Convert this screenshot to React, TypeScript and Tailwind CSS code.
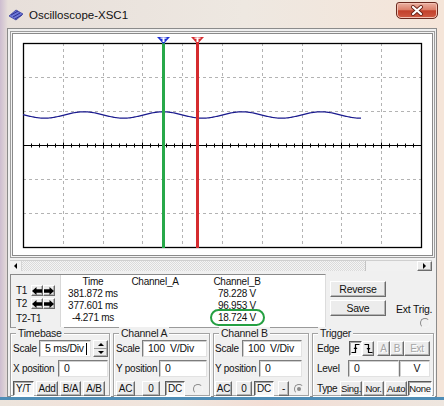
import React from 'react';
import { clsx } from 'clsx';

const raised =
  'border border-t-white border-l-white border-r-[#6c6c6c] border-b-[#6c6c6c] shadow-[inset_-1px_-1px_0_#b4b4b4] bg-[#ececec]';
const pressedCls =
  'border border-t-[#5a5a5a] border-l-[#5a5a5a] border-r-white border-b-white shadow-[inset_1px_1px_0_#a8a8a8] bg-[#f7f7f7]';

interface BtnProps {
  children?: React.ReactNode;
  pressed?: boolean;
  disabled?: boolean;
  className?: string;
}

function Btn({ children, pressed = false, disabled = false, className }: BtnProps) {
  return (
    <div
      className={clsx(
        'flex items-center justify-center shrink-0 leading-none whitespace-nowrap',
        pressed ? pressedCls : raised,
        disabled ? 'text-[#a6a6a6] [text-shadow:1px_1px_0_#fff]' : 'text-[#111]',
        className
      )}
    >
      {children}
    </div>
  );
}

function Field({ children, className }: { children?: React.ReactNode; className?: string }) {
  return (
    <div
      className={clsx(
        'flex items-center shrink-0 bg-white pl-[5px] whitespace-pre leading-none text-[10.5px]',
        'border border-t-[#7c7c7c] border-l-[#7c7c7c] border-r-[#e2e2e2] border-b-[#e2e2e2] shadow-[inset_1px_1px_0_#cfcfcf]',
        className
      )}
    >
      {children}
    </div>
  );
}

function Radio({ checked = false, className }: { checked?: boolean; className?: string }) {
  return (
    <div
      className={clsx(
        'w-[10px] h-[10px] rounded-full shrink-0 flex items-center justify-center',
        'border border-t-[#8a8a8a] border-l-[#8a8a8a] border-r-[#f4f4f4] border-b-[#f4f4f4]',
        className
      )}
    >
      {checked && <div className="w-[4px] h-[4px] rounded-full bg-[#8a8a8a]" />}
    </div>
  );
}

function Group({ title, className, children }: { title: string; className?: string; children: React.ReactNode }) {
  return (
    <div
      className={clsx(
        'relative h-[63px] shrink-0 flex flex-col border border-[#a3a3a3] shadow-[inset_1px_1px_0_#fff,1px_1px_0_#fff]',
        className
      )}
    >
      <span className="absolute -top-[7px] left-[5px] px-[2px] bg-[#f0f0f0] text-[10.5px] leading-[12px] text-[#1a1a1a]">
        {title}
      </span>
      {children}
    </div>
  );
}

function AppIcon() {
  return (
    <svg width="16" height="12" viewBox="0 0 16 12">
      <polygon points="1,7 8,1 15,5 8,11" fill="#6e78d8" />
      <g stroke="#2b2f8c" strokeWidth="1">
        <line x1="3" y1="6" x2="10" y2="2" />
        <line x1="5" y1="8" x2="12" y2="4" />
        <line x1="7" y1="10" x2="14" y2="6" />
      </g>
      <polygon points="1,7 8,1 15,5 8,11" fill="none" stroke="#3a3f9e" strokeWidth="0.8" />
    </svg>
  );
}

function CloseButton() {
  return (
    <div className="ml-auto mr-[6px] mt-[2px] w-[42px] h-[17px] rounded-[3px] rounded-b-[5px] border border-[#6b2a1f] bg-[linear-gradient(#eab1a2,#dc806a_45%,#c2402b_52%,#cf5b43_100%)] shadow-[inset_0_0_0_1px_#f2c0b2] flex items-center justify-center">
      <svg width="14" height="11" viewBox="0 0 14 11">
        <path d="M3 2 L11 9 M11 2 L3 9" stroke="#6a2418" strokeWidth="4" strokeLinecap="round" />
        <path d="M3 2 L11 9 M11 2 L3 9" stroke="#ffffff" strokeWidth="2.2" strokeLinecap="round" />
      </svg>
    </div>
  );
}

function Plot() {
  const x0 = 10;
  const y0 = 9;
  const w = 398;
  const h = 204;
  const dx = w / 10;
  const dy = h / 6;
  const vLines = Array.from({ length: 9 }, (_, i) => Math.round(x0 + dx * (i + 1)) + 0.5);
  const hLines = [1, 2, 4, 5].map((i) => Math.round(y0 + dy * i) + 0.5);
  const axisY = Math.round(y0 + dy * 3) + 0.5;
  const ticks = Array.from({ length: 51 }, (_, i) => ({
    x: Math.round(x0 + (dx / 5) * i) + 0.5,
    major: i % 5 === 0,
  }));

  let d = '';
  for (let x = 10; x <= 348; x++) {
    const y = 81 - 3.2 * Math.cos((2 * Math.PI * (x + 13 - 84)) / 79);
    d += (x === 10 ? 'M' : 'L') + x + ' ' + y.toFixed(2) + ' ';
  }

  return (
    <svg width={419} height={221} className="block">
      <g stroke="#b3b3b3" strokeWidth="1" strokeDasharray="3 3">
        {vLines.map((x) => (
          <line key={'v' + x} x1={x} y1={y0} x2={x} y2={y0 + h} />
        ))}
        {hLines.map((y) => (
          <line key={'h' + y} x1={x0} y1={y} x2={x0 + w} y2={y} />
        ))}
      </g>
      <line x1={x0} y1={axisY} x2={x0 + w} y2={axisY} stroke="#000" strokeWidth="1" />
      <g stroke="#000" strokeWidth="1">
        {ticks.map((t) => (
          <line key={'t' + t.x} x1={t.x} y1={axisY - (t.major ? 3 : 2)} x2={t.x} y2={axisY + (t.major ? 3 : 2)} />
        ))}
      </g>
      <rect x={x0 + 0.5} y={y0 + 0.5} width={w} height={h} fill="none" stroke="#000" strokeWidth="1.3" />
      <path d={d} fill="none" stroke="#1a1a8e" strokeWidth="1.2" />

      {/* cursors */}
      <rect x={149} y={4} width={3} height={210} fill="#27a849" />
      <rect x={183} y={4} width={3} height={210} fill="#d52b2f" />
      <polygon points="144,3 157,3 150.5,10" fill="#1d2fd2" />
      <rect x={149.5} y={3.5} width={2} height={4.5} fill="#fff" />
      <rect x={147.5} y={3.5} width={6} height={1.2} fill="#fff" />
      <polygon points="178,3 191,3 184.5,10" fill="#d52b2f" />
      <rect x={183.5} y={3.5} width={2} height={4.5} fill="#fff" />
      <rect x={181.5} y={3.5} width={6} height={1.2} fill="#fff" />
    </svg>
  );
}

function ArrowBtn({ dir }: { dir: 'left' | 'right' }) {
  return (
    <Btn className="w-[12px] h-[11px]">
      <svg width="10" height="8" viewBox="0 0 10 8">
        {dir === 'left' ? (
          <polygon points="0,4 4.5,0 4.5,2.3 10,2.3 10,5.7 4.5,5.7 4.5,8" fill="#000" />
        ) : (
          <polygon points="10,4 5.5,0 5.5,2.3 0,2.3 0,5.7 5.5,5.7 5.5,8" fill="#000" />
        )}
      </svg>
    </Btn>
  );
}

function EdgeIcon({ rising }: { rising: boolean }) {
  return (
    <svg width="9" height="11" viewBox="0 0 9 11">
      <path d={rising ? 'M0.5 9.5 H4.5 V1.5 H8.5' : 'M0.5 1.5 H4.5 V9.5 H8.5'} fill="none" stroke="#000" strokeWidth="1.2" />
      {rising ? <polygon points="2.5,6 4.5,3.5 6.5,6" fill="#000" /> : <polygon points="2.5,5 4.5,7.5 6.5,5" fill="#000" />}
    </svg>
  );
}

const readout = [
  ['Time', 'Channel_A', 'Channel_B'],
  ['381.872 ms', '', '78.228 V'],
  ['377.601 ms', '', '96.953 V'],
  ['-4.271 ms', '', '18.724 V'],
];

export default function App() {
  return (
    <div className="w-[444px] h-[406px] flex flex-col overflow-hidden font-['Liberation_Sans',Arial,sans-serif] text-[10px] tracking-[-0.25px] text-[#111] bg-[linear-gradient(90deg,#cdbdd0_0px,#e7dfda_8px,#eee8e1_55%,#f5e5d9_100%)]">
      {/* title bar */}
      <div className="h-[28px] shrink-0 flex items-start">
        <div className="flex items-center mt-[8px] ml-[8px] gap-[5px]">
          <AppIcon />
          <span className="text-[11.5px] leading-[14px] tracking-normal text-[#111]">Oscilloscope-XSC1</span>
        </div>
        <CloseButton />
      </div>

      {/* client area */}
      <div className="ml-[7px] w-[430px] h-[369px] shrink-0 flex flex-col border border-[#8b8b8b] bg-[#f0f0f0]">
        {/* screen */}
        <div className="ml-[2px] mt-[2px] w-[425px] h-[227px] shrink-0 border border-[#9d9d9d] bg-[#f4f4f4] p-px">
          <div className="border border-[#8a8a8a] bg-white">
            <Plot />
          </div>
        </div>

        {/* scrollbar */}
        <div className="ml-[2px] mt-[2px] w-[422px] h-[11px] shrink-0 flex border-t border-[#cfcfcf]">
          <div className="w-[12px] h-full bg-[#f2f2f2] border-r border-[#d4d4d4] flex items-center justify-center">
            <div className="w-0 h-0 border-y-[3px] border-y-transparent border-r-[3px] border-r-black" />
          </div>
          <div className="flex-1 h-full bg-[repeating-conic-gradient(#dadada_0%_25%,#f4f4f4_0%_50%)] bg-[length:2px_2px]" />
          <div className="w-[52px] h-full bg-[#f1f1f1] border-l border-[#c4c4c4]" />
          <div className={clsx('w-[15px] h-full flex items-center justify-center', raised)}>
            <div className="w-0 h-0 border-y-[3px] border-y-transparent border-l-[3px] border-l-black" />
          </div>
        </div>

        {/* readout row */}
        <div className="ml-[2px] mt-[3px] h-[54px] shrink-0 flex">
          <div className="w-[316px] h-full flex border border-t-[#8a8a8a] border-l-[#8a8a8a] border-r-[#dcdcdc] border-b-[#9a9a9a]">
            <div className="w-[49px] h-full flex flex-col pl-[5px] pt-[10px]">
              <div className="h-[11px] flex items-center">
                <span className="w-[15px]">T1</span>
                <ArrowBtn dir="left" />
                <ArrowBtn dir="right" />
              </div>
              <div className="h-[11px] mt-[2px] flex items-center">
                <span className="w-[15px]">T2</span>
                <ArrowBtn dir="left" />
                <ArrowBtn dir="right" />
              </div>
              <div className="h-[12px] mt-[3px] flex items-center">T2-T1</div>
            </div>
            <div className="relative flex-1 h-full bg-white border-l border-[#d8d8d8] pt-px">
              <div className="grid grid-cols-[64px_60px_104px] auto-rows-[12px] leading-[12px] text-center">
                {readout.flat().map((t, i) => (
                  <span key={i}>{t}</span>
                ))}
              </div>
              <div className="absolute left-[149px] top-[34px] w-[55px] h-[17px] rounded-[9px] border-2 border-[#25a042]" />
            </div>
          </div>
          <div className="ml-[4px] pt-[7px] flex flex-col">
            <Btn className="w-[56px] h-[16px] text-[10.5px]">Reverse</Btn>
            <Btn className="w-[56px] h-[16px] mt-[3px] text-[10.5px]">Save</Btn>
          </div>
          <div className="ml-[10px] pt-[29px] flex flex-col">
            <span className="leading-[12px] text-[10.5px]">Ext Trig.</span>
            <Radio className="ml-[24px] mt-[3px]" />
          </div>
        </div>

        {/* control groups */}
        <div className="ml-[2px] mt-[5px] flex gap-[3px]">
          <Group title="Timebase" className="w-[100px] pl-[2px]">
            <div className="mt-[6px] h-[17px] flex items-center">
              <span className="w-[26px]">Scale</span>
              <Field className="w-[52px] h-[17px]">
                5 ms/Div<span className="inline-block w-px h-[12px] bg-black ml-[2px]" />
              </Field>
              <div className={clsx('ml-[2px] w-[15px] h-[17px] flex flex-col', raised, 'p-0')}>
                <div className="flex-1 flex items-center justify-center border-b border-[#9a9a9a]">
                  <div className="w-0 h-0 border-x-[3px] border-x-transparent border-b-[3px] border-b-black" />
                </div>
                <div className="flex-1 flex items-center justify-center">
                  <div className="w-0 h-0 border-x-[3px] border-x-transparent border-t-[3px] border-t-black" />
                </div>
              </div>
            </div>
            <div className="mt-[3px] h-[17px] flex items-center">
              <span className="w-[45px]">X position</span>
              <Field className="w-[50px] h-[17px]">0</Field>
            </div>
            <div className="mt-[5px] h-[13px] flex items-center gap-[2px]">
              <Btn pressed className="w-[21px] h-[15px]">Y/T</Btn>
              <Btn className="w-[22px] h-[15px]">Add</Btn>
              <Btn className="w-[21px] h-[15px]">B/A</Btn>
              <Btn className="w-[22px] h-[15px]">A/B</Btn>
            </div>
          </Group>

          <Group title="Channel A" className="w-[97px] pl-[2px]">
            <div className="mt-[6px] h-[17px] flex items-center">
              <span className="w-[26px]">Scale</span>
              <Field className="w-[65px] h-[17px]">100  V/Div</Field>
            </div>
            <div className="mt-[3px] h-[17px] flex items-center">
              <span className="w-[43px]">Y position</span>
              <Field className="w-[48px] h-[17px]">0</Field>
            </div>
            <div className="mt-[5px] h-[13px] flex items-center">
              <Btn className="w-[19px] h-[15px]">AC</Btn>
              <Btn className="ml-[7px] w-[18px] h-[15px]">0</Btn>
              <Btn pressed className="ml-[5px] w-[20px] h-[15px]">DC</Btn>
              <Radio className="ml-[8px]" />
            </div>
          </Group>

          <Group title="Channel B" className="w-[96px] pl-[1px]">
            <div className="mt-[6px] h-[17px] flex items-center">
              <span className="w-[27px]">Scale</span>
              <Field className="w-[60px] h-[17px]">100  V/Div</Field>
            </div>
            <div className="mt-[3px] h-[17px] flex items-center">
              <span className="w-[44px]">Y position</span>
              <Field className="w-[43px] h-[17px]">0</Field>
            </div>
            <div className="mt-[5px] h-[13px] flex items-center">
              <Btn className="w-[17px] h-[15px]">AC</Btn>
              <Btn className="ml-[4px] w-[16px] h-[15px]">0</Btn>
              <Btn pressed className="ml-[2px] w-[20px] h-[15px]">DC</Btn>
              <Btn className="ml-[4px] w-[11px] h-[15px]">-</Btn>
              <Radio checked className="ml-[5px]" />
            </div>
          </Group>

          <Group title="Trigger" className="w-[122px] pl-[4px]">
            <div className="mt-[6px] h-[17px] flex items-center">
              <span className="w-[32px]">Edge</span>
              <Btn pressed className="w-[13px] h-[15px]">
                <EdgeIcon rising />
              </Btn>
              <Btn className="w-[12px] h-[15px]">
                <EdgeIcon rising={false} />
              </Btn>
              <Btn disabled className="ml-[3px] w-[13px] h-[15px]">A</Btn>
              <Btn disabled className="w-[14px] h-[15px]">B</Btn>
              <Btn disabled className="w-[26px] h-[15px]">Ext</Btn>
            </div>
            <div className="mt-[3px] h-[17px] flex items-center">
              <span className="w-[31px]">Level</span>
              <Field className="w-[51px] h-[17px]">0</Field>
              <Field className="w-[31px] h-[17px] justify-center pl-0">V</Field>
            </div>
            <div className="mt-[5px] h-[13px] flex items-center gap-px text-[9.5px] tracking-[-0.35px]">
              <span className="w-[22px] text-[10px]">Type</span>
              <Btn className="w-[22px] h-[15px]">Sing.</Btn>
              <Btn className="w-[21px] h-[15px]">Nor.</Btn>
              <Btn className="w-[22px] h-[15px]">Auto</Btn>
              <Btn pressed className="w-[24px] h-[15px]">None</Btn>
            </div>
          </Group>
        </div>
      </div>

      {/* bottom frame */}
      <div className="h-[9px] shrink-0 border-t-[3px] border-[#4f8db6] bg-[linear-gradient(90deg,#ece4dc_0%,#f2e2da_20%,#efe6de_40%,#f3ddd4_60%,#eee6df_100%)]" />
    </div>
  );
}
